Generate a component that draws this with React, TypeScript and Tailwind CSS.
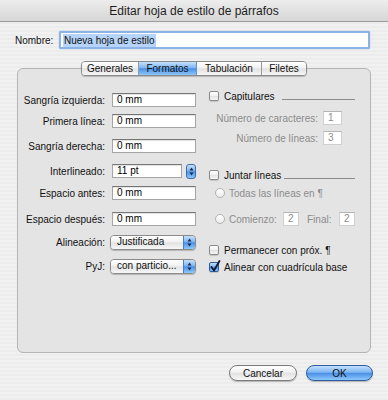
import React from "react";

const blueGrad =
  "bg-[linear-gradient(to_bottom,#c4e0fd_0%,#7db6f3_45%,#4a90e6_52%,#8ec8fb_100%)]";
const whiteGrad =
  "bg-[linear-gradient(to_bottom,#ffffff_0%,#f1f1f1_45%,#e2e2e2_52%,#f7f7f7_100%)]";

function Field({ value, className, disabled }: { value: string; className: string; disabled?: boolean }) {
  return (
    <div
      className={`h-[14px] bg-white border pl-[4px] flex items-center leading-[12px] ${
        disabled
          ? "text-[#8c8c8c] border-[#cfcfcf] border-t-[#b5b5b5]"
          : "text-black border-[#a5a5a5] border-t-[#767676] shadow-[inset_0_1px_1px_rgba(0,0,0,0.12)]"
      } ${className}`}
    >
      {value}
    </div>
  );
}

function Arrows() {
  return (
    <svg width="5" height="9" viewBox="0 0 5 9">
      <path d="M2.5 0.5 L4.5 3.5 L0.5 3.5 Z" fill="#1c2a4a" />
      <path d="M2.5 8.5 L4.5 5.5 L0.5 5.5 Z" fill="#1c2a4a" />
    </svg>
  );
}

function Popup({ value }: { value: string }) {
  return (
    <div className="ml-[5px] w-[86px] h-[15px] flex rounded-[4px] border border-[#8a8a8a] shadow-[0_1px_1px_rgba(0,0,0,0.2)] overflow-hidden">
      <div className={`flex-1 ${whiteGrad} pl-[6px] flex items-center leading-[12px]`}>{value}</div>
      <div className={`w-[12px] ${blueGrad} border-l border-[#4b7cc0] flex items-center justify-center`}>
        <Arrows />
      </div>
    </div>
  );
}

function Checkbox({ checked }: { checked?: boolean }) {
  return (
    <div
      className={`w-[10px] h-[10px] rounded-[2px] border ${
        checked ? `border-[#2e5c9c] ${blueGrad}` : `border-[#8a8a8a] ${whiteGrad}`
      } shadow-[0_1px_1px_rgba(0,0,0,0.15)] relative shrink-0`}
    >
      {checked && (
        <svg className="absolute left-[0px] top-[-3px]" width="11" height="12" viewBox="0 0 11 12">
          <path d="M1.5 7 L4 10.5 L9.5 1" stroke="#121a33" strokeWidth="1.8" fill="none" strokeLinecap="round" strokeLinejoin="round" />
        </svg>
      )}
    </div>
  );
}

function Radio() {
  return (
    <div className="w-[10px] h-[10px] rounded-full border border-[#b2b2b2] bg-[linear-gradient(to_bottom,#ffffff,#ececec)] shrink-0" />
  );
}

function LeftRow({ label, children, className }: { label: string; children: React.ReactNode; className: string }) {
  return (
    <div className={`flex items-center h-[14px] ${className}`}>
      <div className="w-[87px] text-right whitespace-nowrap">{label}</div>
      {children}
    </div>
  );
}

export default function App() {
  return (
    <div className="w-[388px] h-[400px] flex flex-col font-['Liberation_Sans',Arial,sans-serif] text-[10px] text-[#111] bg-[repeating-linear-gradient(0deg,#ececec_0px,#ececec_2px,#f1f1f1_2px,#f1f1f1_4px)] overflow-hidden">
      {/* Title bar */}
      <div className="h-[22px] shrink-0 flex items-center justify-center text-[12px] text-[#1e1e1e] bg-[linear-gradient(to_bottom,#ededed,#d6d6d6)] border-b border-[#9c9c9c]">
        Editar hoja de estilo de párrafos
      </div>

      {/* Nombre */}
      <div className="flex items-center mt-[9px] h-[18px]">
        <div className="ml-[15px] w-[44px]">Nombre:</div>
        <div className="w-[311px] h-[18px] rounded-[2px] border-2 border-[#8cb2e6] shadow-[0_0_1px_#5d8fd8] bg-white flex items-center pl-[2px]">
          <span className="bg-[#b6d4fa] px-[1px] leading-[13px]">Nueva hoja de estilo</span>
        </div>
      </div>

      {/* Tabs */}
      <div className="flex justify-center mt-[12px] relative z-10">
        <div className="flex h-[15px] rounded-[4px] border border-[#8a8a8a] overflow-hidden shadow-[0_1px_1px_rgba(0,0,0,0.2)]">
          <div className={`w-[57px] ${whiteGrad} flex items-center justify-center border-r border-[#9a9a9a]`}>Generales</div>
          <div className={`w-[58px] ${blueGrad} flex items-center justify-center border-r border-[#6b8fc2]`}>Formatos</div>
          <div className={`w-[65px] ${whiteGrad} flex items-center justify-center border-r border-[#9a9a9a]`}>Tabulación</div>
          <div className={`w-[44px] ${whiteGrad} flex items-center justify-center`}>Filetes</div>
        </div>
      </div>

      {/* Panel */}
      <div className="-mt-[8px] mx-[17px] h-[285px] rounded-[6px] border border-[#b4b4b4] bg-[#e4e4e4] grid grid-cols-[191px_1fr]">
        {/* Left column */}
        <div className="flex flex-col pt-[24px]">
          <LeftRow label="Sangría izquierda:" className="">
            <Field value="0 mm" className="ml-[7px] w-[84px]" />
          </LeftRow>
          <LeftRow label="Primera línea:" className="mt-[7px]">
            <Field value="0 mm" className="ml-[7px] w-[84px]" />
          </LeftRow>
          <LeftRow label="Sangría derecha:" className="mt-[11px]">
            <Field value="0 mm" className="ml-[7px] w-[84px]" />
          </LeftRow>
          <LeftRow label="Interlineado:" className="mt-[11px]">
            <Field value="11 pt" className="ml-[7px] w-[70px]" />
            <div className={`ml-[4px] w-[10px] h-[15px] rounded-[3px] border border-[#3e6cb0] ${blueGrad} flex items-center justify-center`}>
              <Arrows />
            </div>
          </LeftRow>
          <LeftRow label="Espacio antes:" className="mt-[8px]">
            <Field value="0 mm" className="ml-[7px] w-[84px]" />
          </LeftRow>
          <LeftRow label="Espacio después:" className="mt-[12px]">
            <Field value="0 mm" className="ml-[7px] w-[84px]" />
          </LeftRow>
          <LeftRow label="Alineación:" className="mt-[9px]">
            <Popup value="Justificada" />
          </LeftRow>
          <LeftRow label="PyJ:" className="mt-[10px]">
            <Popup value="con particio..." />
          </LeftRow>
        </div>

        {/* Right column */}
        <div className="flex flex-col pt-[20px] pr-[15px]">
          <div className="flex items-center h-[14px]">
            <Checkbox />
            <span className="ml-[5px]">Capitulares</span>
            <div className="ml-[7px] flex-1 h-px bg-[#8c8c8c] mt-[6px]" />
          </div>
          <div className="flex items-center h-[14px] mt-[8px] text-[#8c8c8c]">
            <div className="w-[109px] text-right">Número de caracteres:</div>
            <Field value="1" className="ml-[5px] w-[19px] h-[13px]" disabled />
          </div>
          <div className="flex items-center h-[14px] mt-[6px] text-[#8c8c8c]">
            <div className="w-[109px] text-right">Número de líneas:</div>
            <Field value="3" className="ml-[5px] w-[19px] h-[13px]" disabled />
          </div>
          <div className="flex items-center h-[14px] mt-[23px]">
            <Checkbox />
            <span className="ml-[5px]">Juntar líneas</span>
            <div className="ml-[3px] flex-1 h-px bg-[#8c8c8c] mt-[6px]" />
          </div>
          <div className="flex items-center h-[14px] mt-[4px] pl-[6px] text-[#8c8c8c]">
            <Radio />
            <span className="ml-[4px]">Todas las líneas en ¶</span>
          </div>
          <div className="flex items-center h-[14px] mt-[12px] pl-[6px] text-[#8c8c8c]">
            <Radio />
            <span className="ml-[4px] w-[54px]">Comienzo:</span>
            <Field value="2" className="w-[16px] h-[13px]" disabled />
            <span className="ml-[8px] w-[32px]">Final:</span>
            <Field value="2" className="w-[16px] h-[13px]" disabled />
          </div>
          <div className="flex items-center h-[14px] mt-[17px]">
            <Checkbox />
            <span className="ml-[5px]">Permanecer con próx. ¶</span>
          </div>
          <div className="flex items-center h-[14px] mt-[3px]">
            <Checkbox checked />
            <span className="ml-[5px]">Alinear con cuadrícula base</span>
          </div>
        </div>
      </div>

      {/* Buttons */}
      <div className="flex justify-end gap-[9px] pr-[15px] mt-[12px]">
        <div className={`w-[68px] h-[16px] rounded-full border border-[#7a7a7a] ${whiteGrad} shadow-[0_1px_1px_rgba(0,0,0,0.25)] flex items-center justify-center`}>
          Cancelar
        </div>
        <div className={`w-[67px] h-[16px] rounded-full border border-[#2d5c9e] ${blueGrad} shadow-[0_1px_1px_rgba(0,0,0,0.25)] flex items-center justify-center`}>
          OK
        </div>
      </div>
    </div>
  );
}
